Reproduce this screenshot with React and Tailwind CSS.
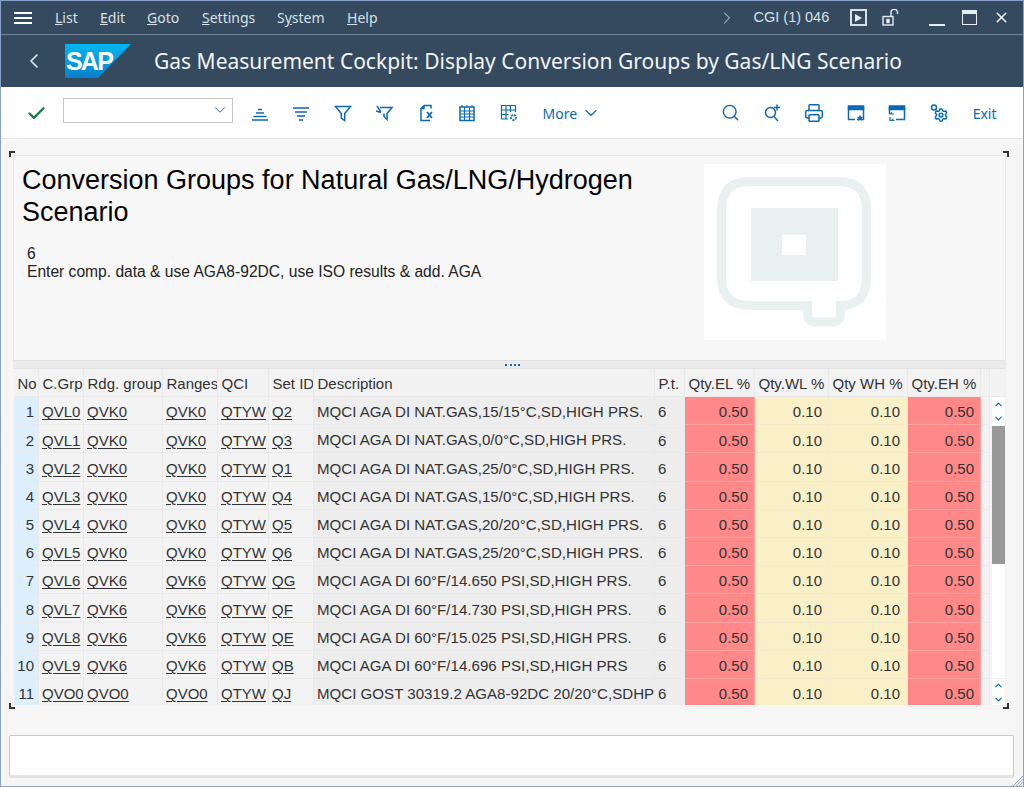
import React from 'react';
import { ChevronLeft, ChevronRight, ChevronDown, ChevronUp, Check, Search, X, Settings, Printer } from 'lucide-react';

const rows = [
  ['1', 'QVL0', 'QVK0', 'QVK0', 'Q2', 'MQCI AGA DI NAT.GAS,15/15°C,SD,HIGH PRS.'],
  ['2', 'QVL1', 'QVK0', 'QVK0', 'Q3', 'MQCI AGA DI NAT.GAS,0/0°C,SD,HIGH PRS.'],
  ['3', 'QVL2', 'QVK0', 'QVK0', 'Q1', 'MQCI AGA DI NAT.GAS,25/0°C,SD,HIGH PRS.'],
  ['4', 'QVL3', 'QVK0', 'QVK0', 'Q4', 'MQCI AGA DI NAT.GAS,15/0°C,SD,HIGH PRS.'],
  ['5', 'QVL4', 'QVK0', 'QVK0', 'Q5', 'MQCI AGA DI NAT.GAS,20/20°C,SD,HIGH PRS.'],
  ['6', 'QVL5', 'QVK0', 'QVK0', 'Q6', 'MQCI AGA DI NAT.GAS,25/20°C,SD,HIGH PRS.'],
  ['7', 'QVL6', 'QVK6', 'QVK6', 'QG', 'MQCI AGA DI 60°F/14.650 PSI,SD,HIGH PRS.'],
  ['8', 'QVL7', 'QVK6', 'QVK6', 'QF', 'MQCI AGA DI 60°F/14.730 PSI,SD,HIGH PRS.'],
  ['9', 'QVL8', 'QVK6', 'QVK6', 'QE', 'MQCI AGA DI 60°F/15.025 PSI,SD,HIGH PRS.'],
  ['10', 'QVL9', 'QVK6', 'QVK6', 'QB', 'MQCI AGA DI 60°F/14.696 PSI,SD,HIGH PRS'],
  ['11', 'QVO0', 'QVO0', 'QVO0', 'QJ', 'MQCI GOST 30319.2 AGA8-92DC 20/20°C,SDHP'],
];

const headers = ['No', 'C.Grp', 'Rdg. group', 'Ranges', 'QCI', 'Set ID', 'Description', 'P.t.', 'Qty.EL %', 'Qty.WL %', 'Qty WH %', 'Qty.EH %', ''];

const gridCols = 'grid grid-cols-[25px_45px_79px_55px_51px_45px_341px_30px_70px_74px_79px_73px_9px]';

const Svg = ({ children, className = 'w-5 h-5' }) => (
  <svg viewBox="0 0 20 20" fill="none" stroke="currentColor" strokeWidth="1.5" className={className}>
    {children}
  </svg>
);

const toolIcons = [
  <Svg key="a"><path d="M8 6.500h4M6 10h8M3.500 13.500h13M2 17h16" strokeWidth="1.600" /></Svg>,
  <Svg key="b"><path d="M2 5h16M4 9h12M6 13h8M8 17h4" strokeWidth="1.600" /></Svg>,
  <Svg key="c"><path d="M2.500 3.500h15l-5.800 7v7l-3.400-2.500v-4.500z" /></Svg>,
  <Svg key="d"><path d="M6 4.500h12l-5 6v6l-3-3v-3M2 8l5 1.500M3 3l4 6" /></Svg>,
  <Svg key="e"><path d="M8 2.500l-3 3v12h9M8 2.500h7v3M8 2.500v3H5" /><path d="M11 9l5 6M16 9l-5 6" strokeWidth="1.800" /></Svg>,
  <Svg key="f"><rect x="3" y="4" width="14" height="13.500" /><path d="M3 8h14M3 11h14M3 14h14M7.500 4v13M12.500 4v13M5 2v2M10 2v2M15 2v2" strokeWidth="1.100" /></Svg>,
  <Svg key="g"><path d="M9 16H2.500V2.500h14V9M2.500 7h14M2.500 11.500h7M7 2.500V16M11.500 2.500V9" strokeWidth="1.200" /><circle cx="14.500" cy="14.500" r="2.500" strokeWidth="1.800" strokeDasharray="2 1" /></Svg>,
];

const rightIcons = [
  <Search key="s" size={19} strokeWidth={1.800} />,
  <Svg key="sp"><circle cx="8.500" cy="9.500" r="5" /><path d="M12 13.500l4 4.500M15 1.500v6M12 4.500h6" /></Svg>,
  <Printer key="p" size={20} strokeWidth={1.800} />,
  <Svg key="w1"><path d="M2.500 4.500h15v12H11M2.500 4.500v12H9" /><path d="M2.500 3h15v3.500h-15z" fill="currentColor" /><path d="M14 11.500l1 2.300 2.300.2-1.800 1.500.6 2.300-2.100-1.200-2.100 1.200.6-2.300-1.800-1.500 2.300-.2z" fill="currentColor" stroke="none" /></Svg>,
  <Svg key="w2"><path d="M2.500 11V4.500h15v12H9" /><path d="M2.500 3h15v3.500h-15z" fill="currentColor" /><path d="M7 11H3.500l1.500-1.500M3 14v3.500h3.500l-1.500-1.500" strokeWidth="1.200" /></Svg>,
  <Svg key="w3"><circle cx="5" cy="4.500" r="2.500" /><Settings x="4.500" y="4.500" width="15" height="15" strokeWidth={2.400} /></Svg>,
];

const Cell = ({ className = '', children }) => (
  <div className={`flex items-center pt-[4px] h-[28.2px] border-r border-b border-[#e9e9e9] whitespace-nowrap overflow-hidden ${className}`}>
    {children}
  </div>
);

const Link = ({ children }) => <Cell className="bg-[#f3f3f3] pl-[3px]"><span className="underline underline-offset-2">{children}</span></Cell>;

const Corner = ({ className }) => <div className={`absolute w-[6px] h-[6px] border-[#333] ${className}`} />;

const ScrollArrows = () => (
  <>
    <ChevronUp size={11} strokeWidth={2.400} />
    <ChevronDown size={11} strokeWidth={2.400} />
  </>
);

export default function App() {
  return (
    <div className="w-[1024px] h-[787px] overflow-hidden flex flex-col bg-[#f6f6f6] border border-[#87a3c9] text-[#333] font-['Liberation_Sans',sans-serif] text-[15px]">
      {/* Menu bar */}
      <div className="h-[34px] shrink-0 bg-[#354a5f] border-b border-[#6f8296] flex items-center text-[#d9e0e7] font-['Noto_Sans',sans-serif] text-[14px]">
        <div className="ml-[13px] w-[18px] flex flex-col gap-[3px]">
          <div className="h-[2px] bg-white" />
          <div className="h-[2px] bg-white" />
          <div className="h-[2px] bg-white" />
        </div>
        <div className="ml-[23px] w-[45px]"><u>L</u>ist</div>
        <div className="w-[47px]"><u>E</u>dit</div>
        <div className="w-[55px]"><u>G</u>oto</div>
        <div className="w-[75px]"><u>S</u>ettings</div>
        <div className="w-[70px]">S<u>y</u>stem</div>
        <div><u>H</u>elp</div>
        <ChevronRight size={20} strokeWidth={1.200} className="ml-[339px] text-[#d9e0e7]" />
        <div className="ml-[17px] w-[76px] font-['Liberation_Sans',sans-serif] text-[14.500px]">CGI (1) 046</div>
        <div className="ml-[20px] w-[17px] h-[17px] border-2 border-[#d9e0e7] flex items-center justify-center">
          <div className="border-y-[4px] border-l-[7px] border-y-transparent border-l-[#e8edf2] ml-[1px]" />
        </div>
        <svg viewBox="0 0 18 18" fill="none" stroke="#e8edf2" strokeWidth="1.400" className="ml-[15px] w-[18px] h-[18px]">
          <rect x="1" y="7.500" width="10" height="8.500" />
          <path d="M9 7V4a3 3 0 0 1 6.500-1v2" />
          <rect x="5" y="10.500" width="2" height="3" fill="#e8edf2" />
        </svg>
        <div className="ml-[29px] mt-[14px] w-[16px] h-[2px] bg-[#e8edf2]" />
        <div className="ml-[17px] w-[15px] h-[15px] border border-[#e8edf2] border-t-[4px]" />
        <X size={17} strokeWidth={2.200} className="ml-[16px] text-[#f0f3f6]" />
      </div>

      {/* Title bar */}
      <div className="h-[52px] shrink-0 bg-[#354a5f] flex items-center text-white">
        <ChevronLeft size={24} strokeWidth={1.700} className="ml-[21px] text-[#dce6f0]" />
        <div className="relative ml-[19px] w-[66px] h-[34px]">
          <svg viewBox="0 0 66 34" className="absolute inset-0 w-full h-full">
            <defs>
              <linearGradient id="sapBlue" x1="0" y1="0" x2="0" y2="1">
                <stop offset="0" stopColor="#00b8f1" />
                <stop offset="1" stopColor="#0a7fc9" />
              </linearGradient>
            </defs>
            <polygon points="0,0 66,0 33,34 0,34" fill="url(#sapBlue)" />
          </svg>
          <span className="absolute left-[1px] top-[4px] font-['Liberation_Sans',sans-serif] font-bold text-[25px] leading-[26px] tracking-[-1.800px] text-white">SAP</span>
        </div>
        <div className="ml-[23px] pt-[1px] text-[21px] font-['Noto_Sans',sans-serif] text-[#f2f4f6] whitespace-nowrap">
          Gas Measurement Cockpit: Display Conversion Groups by Gas/LNG Scenario
        </div>
      </div>

      {/* Toolbar */}
      <div className="h-[52px] shrink-0 bg-white border-b border-[#e5e5e5] flex items-center text-[#0a6ab6] text-[14px] pt-[1px]">
        <Check size={21} strokeWidth={2.600} className="ml-[25px] text-[#107e3e]" />
        <div className="ml-[16px] w-[170px] h-[25px] -mt-[6px] border border-[#c4c4c4] flex items-center justify-end pr-[3px]">
          <ChevronDown size={18} strokeWidth={1.300} />
        </div>
        <div className="ml-[6px] flex">
          {toolIcons.map((icon, i) => (
            <div key={i} className="w-[41.500px] flex justify-center">{icon}</div>
          ))}
        </div>
        <div className="ml-[13px] flex items-center font-['Noto_Sans',sans-serif]">
          More <ChevronDown size={20} strokeWidth={1.300} className="ml-[4px]" />
        </div>
        <div className="ml-[109px] flex">
          {rightIcons.map((icon, i) => (
            <div key={i} className="w-[41.600px] flex justify-center">{icon}</div>
          ))}
        </div>
        <div className="ml-[13px] font-['Noto_Sans',sans-serif]">Exit</div>
      </div>

      {/* Main */}
      <div className="relative flex-1 px-[12px] pt-[16px] flex flex-col min-h-0">
        <Corner className="left-[8px] top-[12px] border-l-2 border-t-2" />
        <Corner className="left-[1002px] top-[12px] border-r-2 border-t-2" />
        <Corner className="left-[8px] top-[564px] border-l-2 border-b-2" />
        <Corner className="left-[1002px] top-[564px] border-r-2 border-b-2" />

        <div className="w-[993px] h-[205px] shrink-0 border border-[#e5e5e5] border-b-0 flex bg-[#f7f7f7]">
          <div className="w-[690px] pl-[8px] pt-[9px] text-black">
            <div className="text-[27px] leading-[31.500px]">Conversion Groups for Natural Gas/LNG/Hydrogen<br />Scenario</div>
            <div className="mt-[17px] pl-[5px] text-[15.600px] leading-[18px] text-[#222]">
              <div>6</div>
              <div>Enter comp. data &amp; use AGA8-92DC, use ISO results &amp; add. AGA</div>
            </div>
          </div>
          <div className="mt-[8px] w-[182px] h-[176px] bg-white">
            <svg viewBox="0 0 182 176" className="w-full h-full">
              <path d="M45 141.500H103.500V150Q103.500 158 111 158H129Q136.500 158 136.500 150V141.500Q162.500 141.500 162.500 113V46Q162.500 17.500 134 17.500H46Q17.500 17.500 17.500 46V113Q17.500 141.500 45 141.500Z" fill="none" stroke="#e8f1f0" strokeWidth="9" />
              <path fillRule="evenodd" d="M47 44h87v73H47zM78 71v20h24V71z" fill="#e8f1f0" />
            </svg>
          </div>
        </div>

        {/* Split bar */}
        <div className="w-[993px] h-[9px] shrink-0 bg-[#ebebeb] border-y border-[#e2e2e2] flex justify-center items-center">
          <div className="ml-[5px] w-[15px] h-[2px] border-t-2 border-dotted border-[#0a6ab6]" />
        </div>

        {/* Table */}
        <div className="w-[993px] h-[336px] overflow-hidden flex shrink-0 pl-[1px]">
          <div className="w-[977px]">
            <div className={gridCols}>
              {headers.map((h, i) => (
                <div key={i} className="h-[28px] flex items-center pt-[3px] bg-[#f2f2f2] border-r border-b border-[#e9e9e9] pl-[3.500px] whitespace-nowrap overflow-hidden">{h}</div>
              ))}
            </div>
            {rows.map((r) => (
              <div key={r[0]} className={gridCols}>
                <Cell className="bg-[#ddeefc] justify-end pr-[4px]">{r[0]}</Cell>
                <Link>{r[1]}</Link>
                <Link>{r[2]}</Link>
                <Link>{r[3]}</Link>
                <Link>QTYW</Link>
                <Link>{r[4]}</Link>
                <Cell className="bg-[#ededed] pl-[3px] text-[15.100px]">{r[5]}</Cell>
                <Cell className="bg-[#ededed] pl-[3px]">6</Cell>
                <Cell className="bg-[#ff8888] border-[#ffa3a3] justify-end pr-[6px]">0.50</Cell>
                <Cell className="bg-[#faf0c8] border-[#f3ebcb] justify-end pr-[6px]">0.10</Cell>
                <Cell className="bg-[#faf0c8] border-[#f3ebcb] justify-end pr-[7px]">0.10</Cell>
                <Cell className="bg-[#ff8888] border-[#ffa3a3] justify-end pr-[6px]">0.50</Cell>
                <Cell className="bg-[#f2f2f2]"> </Cell>
              </div>
            ))}
          </div>
          {/* Scrollbar */}
          <div className="w-[15px] flex flex-col text-[#0a6ab6] bg-[#f2f2f2] px-[1px]">
            <div className="h-[28px] -mx-[1px] border-b border-[#e9e9e9]" />
            <div className="h-[29px] bg-white flex flex-col items-center justify-center gap-[3px]"><ScrollArrows /></div>
            <div className="h-[138px] bg-[#999999]" />
            <div className="h-[114px] bg-white" />
            <div className="h-[27px] bg-white border-t border-[#eeeeee] flex flex-col items-center justify-center gap-[3px]"><ScrollArrows /></div>
          </div>
        </div>

        {/* Message area */}
        <div className="relative mt-[30px] -ml-[4px] w-[1005px] h-[43px] shrink-0 bg-white border border-[#c8c8c8] border-b-[3px] border-b-[#e3e3e3] rounded-[2px]" />
        <svg viewBox="0 0 10 10" className="absolute right-0 bottom-0 w-[10px] h-[10px]" stroke="#8aa4c8" strokeWidth="1">
          <path d="M0 10L10 0M3 10L10 3M6 10L10 6" />
        </svg>
      </div>
    </div>
  );
}
